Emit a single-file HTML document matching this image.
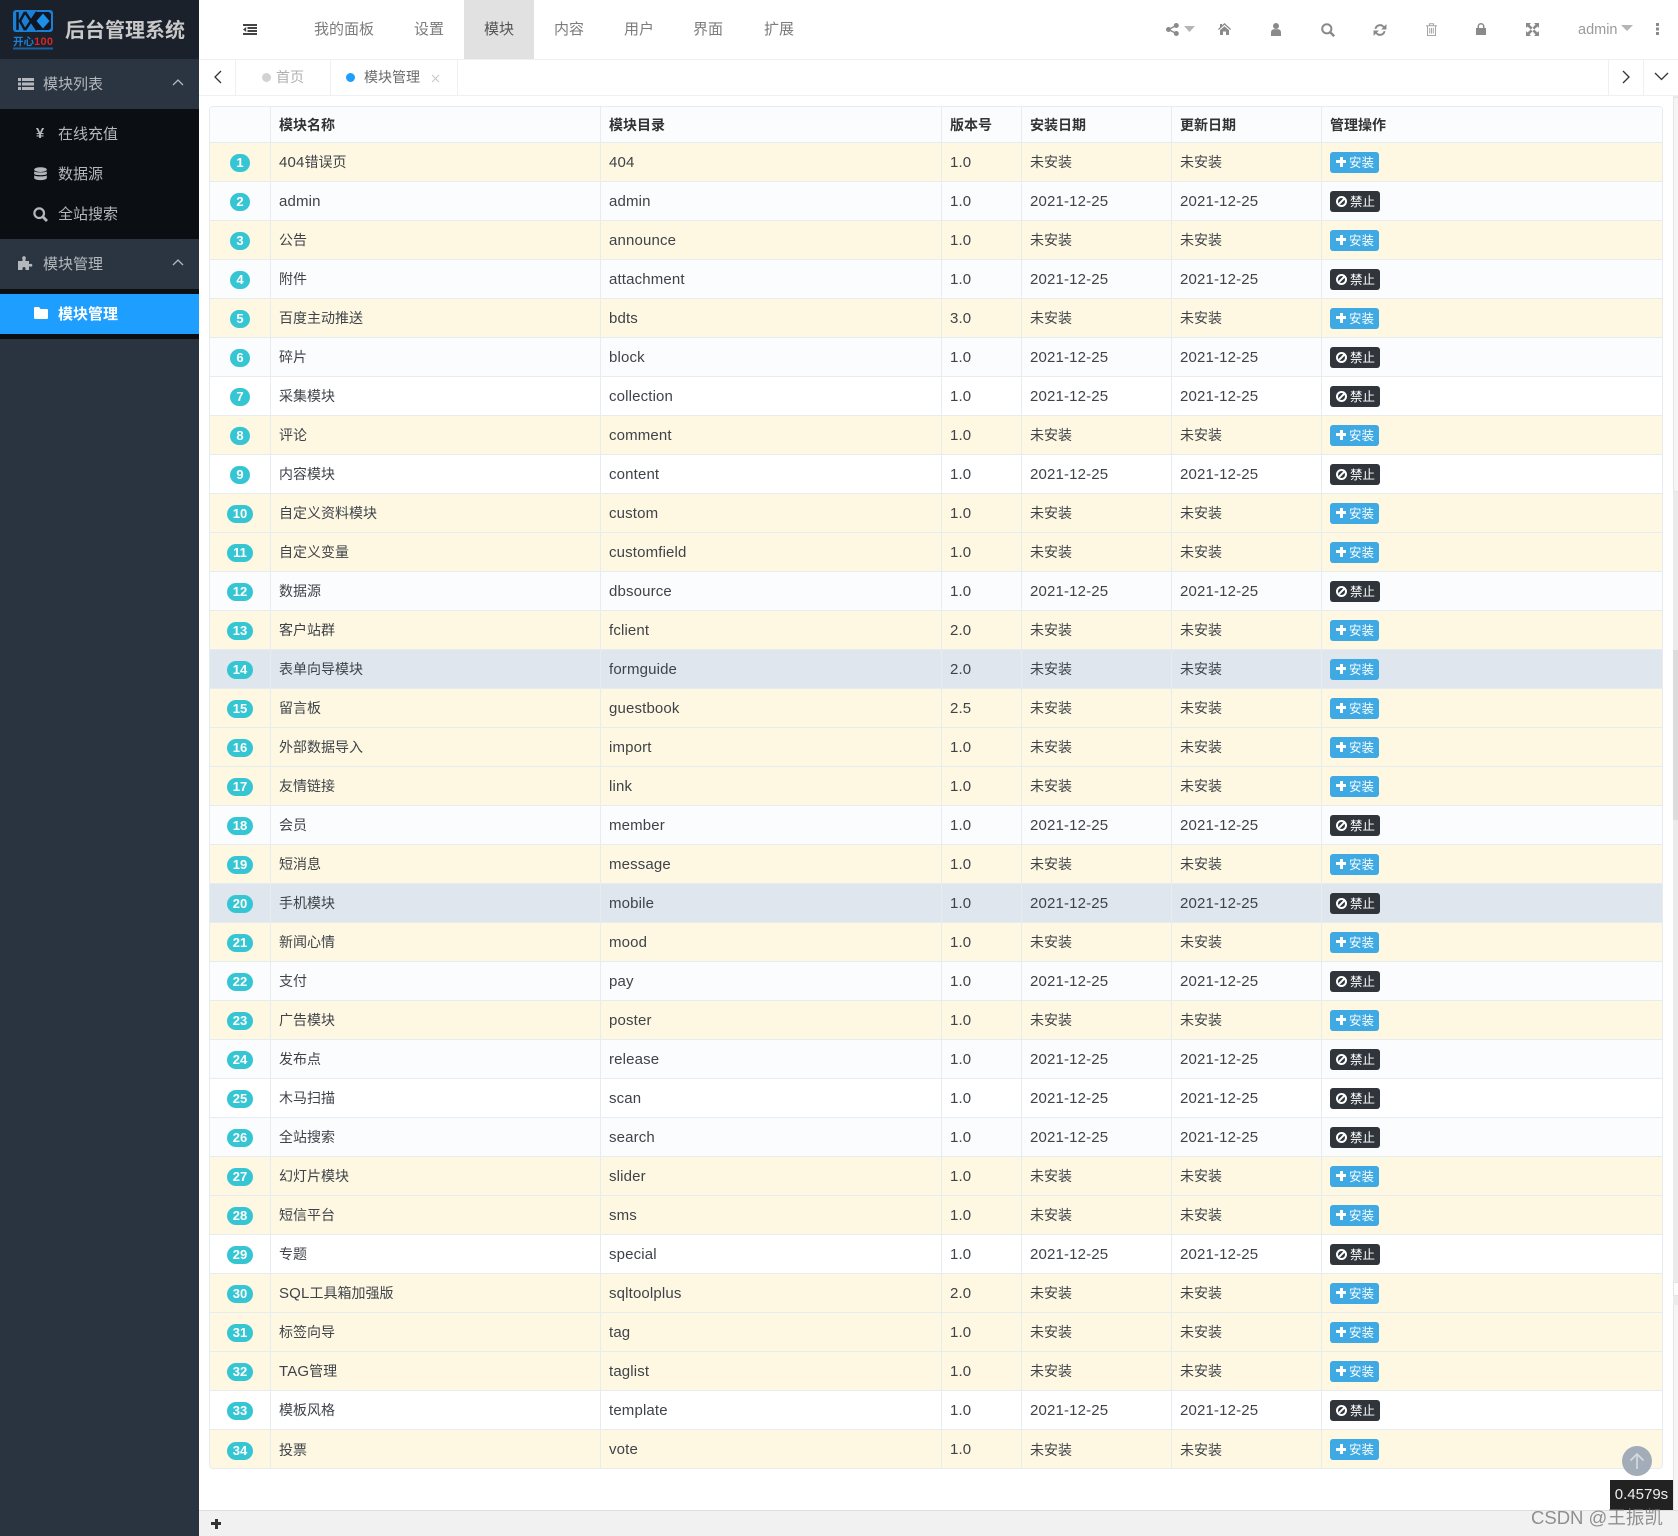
<!DOCTYPE html>
<html lang="zh"><head><meta charset="utf-8"><title>后台管理系统</title>
<style>
*,*::before,*::after{box-sizing:border-box}
html,body{margin:0;padding:0;width:1678px;height:1536px;overflow:hidden;background:#fff}
body{position:relative;font-family:"Liberation Sans","Noto Sans CJK SC",sans-serif;font-size:14px;color:#3d4249}
.a{position:absolute;white-space:nowrap}
svg{position:absolute;display:block}
#side{position:absolute;left:0;top:0;width:199px;height:1536px;background:#2a3440}
.nav{top:0;height:59px;line-height:60px;font-size:15px;color:#7c7c7c}
.sd{font-size:15px;color:#b4b8bd;line-height:24px;height:24px}
table{border-collapse:separate;border-spacing:0;table-layout:fixed;width:1452px}
th,td{padding:0 0 0 8px;border-right:1px solid #e7ecf1;border-bottom:1px solid #e7ecf1;text-align:left;overflow:hidden;white-space:nowrap;font-size:14px}
th{height:36px;font-weight:700;color:#333;background:#fbfcfe}
td{height:39px;background:#fff;color:#3f4349}
th:last-child,td:last-child{border-right:0}
tr:last-child td{border-bottom:0}
tr:nth-child(even) td{background:#fbfcfe}
tr.y td{background:#fef8e3!important}
tr.h td{background:#e0e6ee!important}
td:nth-child(1){padding:2px 0 0;text-align:center}
td:nth-child(3),td:nth-child(4),.l{font-family:"Liberation Sans",sans-serif;font-size:15px;letter-spacing:.15px}
.n{display:inline-block;min-width:20px;height:18px;line-height:18px;padding:0 3px;border-radius:9px;background:#36c6d3;color:#fff;font-size:13px;font-weight:700;text-align:center}
.n.w{min-width:26px}
.i,.b{display:inline-block;position:relative;height:21px;width:49px;border-radius:3px;background:#3ea9e2;color:#fff;line-height:22px;font-size:12.500px;padding-left:19px;vertical-align:middle}
.b{width:50px;background:#2f353b;padding-left:20px}
.i::before{content:"";position:absolute;left:6px;top:5px;width:10px;height:10px;background:linear-gradient(#fff,#fff) center/10px 3px no-repeat,linear-gradient(#fff,#fff) center/3px 10px no-repeat}
.b::before{content:"";position:absolute;left:6px;top:5px;width:11px;height:11px;border:2px solid #fff;border-radius:50%}
.b::after{content:"";position:absolute;left:7.500px;top:9.500px;width:8px;height:2px;background:#fff;transform:rotate(-45deg)}
</style></head><body>

<div id="side">
<div class="a" style="left:0;top:0;width:199px;height:59px;background:#1a212b"></div>
<svg style="left:13px;top:10px" width="41" height="40" viewBox="0 0 41 40">
<rect x="0" y="0" width="40" height="22" rx="3" fill="#1c7fd6"/>
<path d="M24 2H36L38 4V18L36 20H24L18 11Z" fill="#101722"/>
<path d="M30 3.500L36.500 11L30 18.500L23.500 11Z" fill="#1c8fe8"/>
<path d="M4.500 2V20M12 2L7 11L12 20M12 2L24 20M24 2L12 20" fill="none" stroke="#101722" stroke-width="2.500"/>
<text x="0" y="35" font-size="10.500" font-weight="700" fill="#1c7fd6" font-family="Noto Sans CJK SC">开心</text>
<text x="21" y="35" font-size="11" font-weight="700" fill="#d8242a" font-family="Liberation Sans" textLength="19">100</text>
<rect x="0" y="37.500" width="40" height="2" fill="#1c5f9e"/>
</svg>
<div class="a" style="left:65px;top:16px;font-size:20px;line-height:30px;font-weight:700;color:#c9c9c9">后台管理系统</div>

<div class="a" style="left:0;top:59px;width:199px;height:50px;background:#2b3541"></div>
<svg style="left:18px;top:77px" width="16" height="14" viewBox="0 0 16 14" fill="#b4b8bd"><path d="M0 1h3v3H0zM4 1h12v3H4zM0 5.500h3v3H0zM4 5.500h12v3H4zM0 10h3v3H0zM4 10h12v3H4z"/></svg>
<div class="a sd" style="left:43px;top:73px">模块列表</div>
<svg style="left:172px;top:78px" width="12" height="8" viewBox="0 0 12 8" fill="none" stroke="#b4b8bd" stroke-width="1.300"><path d="M1 7L6 2L11 7"/></svg>

<div class="a" style="left:0;top:109px;width:199px;height:130px;background:#0b0e13"></div>
<div class="a" style="left:33px;top:123px;width:14px;text-align:center;font-size:15px;font-weight:700;line-height:22px;color:#b4b8bd">¥</div>
<div class="a sd" style="left:58px;top:123px">在线充值</div>
<svg style="left:34px;top:167px" width="13" height="15" viewBox="0 0 13 15" fill="#b4b8bd"><ellipse cx="6.500" cy="2.600" rx="6.300" ry="2.400"/><path d="M.2 4.200c1 1.600 11.600 1.600 12.600 0V7c-1 1.600-11.600 1.600-12.600 0zM.2 8.200c1 1.600 11.600 1.600 12.600 0V11c0 2.800-12.600 2.800-12.600 0z"/></svg>
<div class="a sd" style="left:58px;top:163px">数据源</div>
<svg style="left:33px;top:207px" width="15" height="15" viewBox="0 0 15 15" fill="none" stroke="#b4b8bd" stroke-width="2.200"><circle cx="6.200" cy="6.200" r="4.800"/><path d="M9.800 9.800L14 14" stroke-width="2.800"/></svg>
<div class="a sd" style="left:58px;top:203px">全站搜索</div>

<div class="a" style="left:0;top:239px;width:199px;height:50px;background:#2b3541"></div>
<svg style="left:18px;top:256px" width="15" height="14" viewBox="0 0 15 14" fill="#b4b8bd"><path d="M0 5H4.500V3A1.800 1.800 0 1 1 7.500 3V5H11V8H12A1.500 1.500 0 1 1 12 10.500H11V14H7.500V12.500A1.500 1.500 0 0 0 4.500 12.500V14H0Z"/></svg>
<div class="a sd" style="left:43px;top:253px">模块管理</div>
<svg style="left:172px;top:258px" width="12" height="8" viewBox="0 0 12 8" fill="none" stroke="#b4b8bd" stroke-width="1.300"><path d="M1 7L6 2L11 7"/></svg>

<div class="a" style="left:0;top:289px;width:199px;height:50px;background:#0b0e13"></div>
<div class="a" style="left:0;top:294px;width:199px;height:40px;background:#1e9fff"></div>
<svg style="left:34px;top:307px" width="14" height="12" viewBox="0 0 14 12" fill="#fff"><path d="M1.200 0H5L6.500 2H12.800C13.500 2 14 2.500 14 3.200V10.800C14 11.500 13.500 12 12.800 12H1.200C.5 12 0 11.500 0 10.800V1.200C0 .5.500 0 1.200 0Z"/></svg>
<div class="a sd" style="left:58px;top:303px;color:#fff;font-weight:700">模块管理</div>
</div>

<!-- top nav -->
<div class="a" style="left:199px;top:59px;width:1479px;height:1px;background:#eef0f2"></div>
<svg style="left:243px;top:24px" width="14" height="11" viewBox="0 0 14 11" fill="#444"><path d="M0 0h14v2H0zM4.500 3h9.500v2H4.500zM4.500 6h9.500v2H4.500zM0 9h14v2H0zM3.200 3v5L0 5.500z"/></svg>
<div class="a" style="left:464px;top:0;width:70px;height:59px;background:#e1e1e1"></div>
<div class="a nav" style="left:314px">我的面板</div>
<div class="a nav" style="left:414px">设置</div>
<div class="a nav" style="left:484px;color:#555">模块</div>
<div class="a nav" style="left:554px">内容</div>
<div class="a nav" style="left:624px">用户</div>
<div class="a nav" style="left:693px">界面</div>
<div class="a nav" style="left:764px">扩展</div>

<svg style="left:1166px;top:23px" width="13" height="13" viewBox="0 0 13 13" fill="#8a8a8a"><circle cx="10.300" cy="2.500" r="2.500"/><circle cx="2.500" cy="6.500" r="2.500"/><circle cx="10.300" cy="10.500" r="2.500"/><path d="M2.500 6.500L10.300 2.500M2.500 6.500L10.300 10.500" stroke="#8a8a8a" stroke-width="1.500"/></svg>
<svg style="left:1184px;top:26px" width="11" height="6" viewBox="0 0 11 6" fill="#b5b5b5"><path d="M0 0H11L5.500 6Z"/></svg>
<svg style="left:1218px;top:23px" width="13" height="12" viewBox="0 0 13 12" fill="#8a8a8a"><path d="M6.500 0L13 6L12.200 7L6.500 1.800L.8 7L0 6L2 4.200V1H4V2.300ZM2 7.200L6.500 3.200L11 7.200V12H8V8.500H5V12H2Z"/></svg>
<svg style="left:1271px;top:23px" width="10" height="13" viewBox="0 0 10 13" fill="#8a8a8a"><circle cx="5" cy="3" r="3"/><path d="M0 13V9.500C0 7.500 1.500 6.300 3 6.300H7C8.500 6.300 10 7.500 10 9.500V13Z"/></svg>
<svg style="left:1321px;top:23px" width="14" height="14" viewBox="0 0 14 14" fill="none" stroke="#8a8a8a" stroke-width="2"><circle cx="5.800" cy="5.800" r="4.600"/><path d="M9.200 9.200L13.200 13.200" stroke-width="2.500"/></svg>
<svg style="left:1373px;top:23px" width="14" height="14" viewBox="0 0 13 13" fill="#8a8a8a"><path d="M1.500 5.500A5 5 0 0 1 10.400 3L12.500 1V6H7.500L9.300 4.200A3.500 3.500 0 0 0 3.200 5.500ZM11.500 7.500A5 5 0 0 1 2.600 10L.5 12V7H5.500L3.700 8.800A3.500 3.500 0 0 0 9.800 7.500Z"/></svg>
<svg style="left:1426px;top:23px" width="11" height="13" viewBox="0 0 11 13" fill="none" stroke="#a5a5a5" stroke-width="1"><path d="M0 2.800H11M3.500 2.500V.7H7.500V2.500M1.500 2.800V12.500H9.500V2.800M3.700 5V10.500M5.500 5V10.500M7.300 5V10.500"/></svg>
<svg style="left:1476px;top:23px" width="10" height="12" viewBox="0 0 10 12" fill="#8a8a8a"><path d="M0 5H1.500V3.500A3.500 3.500 0 0 1 8.500 3.500V5H10V12H0ZM3 5H7V3.500A2 2 0 0 0 3 3.500Z" fill-rule="evenodd"/></svg>
<svg style="left:1526px;top:23px" width="13" height="13" viewBox="0 0 13 13" fill="#8a8a8a"><path d="M0 0H5L3.500 1.500L6.500 4.800L4.800 6.500L1.500 3.500L0 5ZM13 0V5L11.500 3.500L8.200 6.500L6.500 4.800L9.500 1.500L8 0ZM0 13V8L1.500 9.500L4.800 6.500L6.500 8.200L3.500 11.500L5 13ZM13 13H8L9.500 11.500L6.500 8.200L8.200 6.500L11.500 9.500L13 8Z"/></svg>
<div class="a" style="left:1578px;top:0;line-height:60px;font-size:14.500px;color:#9a9a9a">admin</div>
<svg style="left:1621px;top:25px" width="12" height="6" viewBox="0 0 12 6" fill="#b5b5b5"><path d="M0 0H12L6 6Z"/></svg>
<svg style="left:1656px;top:23px" width="3" height="12" viewBox="0 0 3 12" fill="#8a8a8a"><path d="M0 0h3v3H0zM0 4.500h3v3H0zM0 9h3v3H0z"/></svg>

<!-- tab bar -->
<div class="a" style="left:199px;top:95px;width:1479px;height:1px;background:#eef0f2"></div>
<div class="a" style="left:235px;top:60px;width:1px;height:35px;background:#f0f0f0"></div>
<div class="a" style="left:330px;top:60px;width:1px;height:35px;background:#f0f0f0"></div>
<div class="a" style="left:457px;top:60px;width:1px;height:35px;background:#f0f0f0"></div>
<div class="a" style="left:1608px;top:60px;width:1px;height:35px;background:#f0f0f0"></div>
<div class="a" style="left:1643px;top:60px;width:1px;height:35px;background:#f0f0f0"></div>
<svg style="left:213px;top:70px" width="9" height="14" viewBox="0 0 9 14" fill="none" stroke="#333" stroke-width="1.300"><path d="M8 1L2 7L8 13"/></svg>
<div class="a" style="left:262px;top:73px;width:9px;height:9px;border-radius:50%;background:#d2d2d2"></div>
<div class="a" style="left:276px;top:64px;line-height:26px;color:#b0b0b0">首页</div>
<div class="a" style="left:346px;top:73px;width:9px;height:9px;border-radius:50%;background:#1e9fff"></div>
<div class="a" style="left:364px;top:64px;line-height:26px;color:#6a6a6a">模块管理</div>
<svg style="left:431px;top:74px" width="9" height="9" viewBox="0 0 9 9" fill="none" stroke="#c8c8c8" stroke-width="1.100"><path d="M1 1L8 8M8 1L1 8"/></svg>
<svg style="left:1622px;top:70px" width="9" height="14" viewBox="0 0 9 14" fill="none" stroke="#333" stroke-width="1.300"><path d="M1 1L7 7L1 13"/></svg>
<svg style="left:1654px;top:72px" width="15" height="9" viewBox="0 0 15 9" fill="none" stroke="#333" stroke-width="1.300"><path d="M1 1L7.500 7.500L14 1"/></svg>

<!-- table -->
<div class="a" style="left:209px;top:106px;width:1454px;height:1363px;border:1px solid #e7ecf1;border-radius:4px;overflow:hidden">
<table>
<colgroup><col style="width:61px"><col style="width:330px"><col style="width:341px"><col style="width:80px"><col style="width:150px"><col style="width:150px"><col style="width:340px"></colgroup>
<thead><tr><th></th><th>模块名称</th><th>模块目录</th><th>版本号</th><th>安装日期</th><th>更新日期</th><th>管理操作</th></tr></thead>
<tbody>
<tr class="y"><td><span class="n">1</span></td><td><span class="l">404</span>错误页</td><td>404</td><td>1.0</td><td>未安装</td><td>未安装</td><td><span class="i">安装</span></td></tr>
<tr><td><span class="n">2</span></td><td><span class="l">admin</span></td><td>admin</td><td>1.0</td><td class="l">2021-12-25</td><td class="l">2021-12-25</td><td><span class="b">禁止</span></td></tr>
<tr class="y"><td><span class="n">3</span></td><td>公告</td><td>announce</td><td>1.0</td><td>未安装</td><td>未安装</td><td><span class="i">安装</span></td></tr>
<tr><td><span class="n">4</span></td><td>附件</td><td>attachment</td><td>1.0</td><td class="l">2021-12-25</td><td class="l">2021-12-25</td><td><span class="b">禁止</span></td></tr>
<tr class="y"><td><span class="n">5</span></td><td>百度主动推送</td><td>bdts</td><td>3.0</td><td>未安装</td><td>未安装</td><td><span class="i">安装</span></td></tr>
<tr><td><span class="n">6</span></td><td>碎片</td><td>block</td><td>1.0</td><td class="l">2021-12-25</td><td class="l">2021-12-25</td><td><span class="b">禁止</span></td></tr>
<tr><td><span class="n">7</span></td><td>采集模块</td><td>collection</td><td>1.0</td><td class="l">2021-12-25</td><td class="l">2021-12-25</td><td><span class="b">禁止</span></td></tr>
<tr class="y"><td><span class="n">8</span></td><td>评论</td><td>comment</td><td>1.0</td><td>未安装</td><td>未安装</td><td><span class="i">安装</span></td></tr>
<tr><td><span class="n">9</span></td><td>内容模块</td><td>content</td><td>1.0</td><td class="l">2021-12-25</td><td class="l">2021-12-25</td><td><span class="b">禁止</span></td></tr>
<tr class="y"><td><span class="n w">10</span></td><td>自定义资料模块</td><td>custom</td><td>1.0</td><td>未安装</td><td>未安装</td><td><span class="i">安装</span></td></tr>
<tr class="y"><td><span class="n w">11</span></td><td>自定义变量</td><td>customfield</td><td>1.0</td><td>未安装</td><td>未安装</td><td><span class="i">安装</span></td></tr>
<tr><td><span class="n w">12</span></td><td>数据源</td><td>dbsource</td><td>1.0</td><td class="l">2021-12-25</td><td class="l">2021-12-25</td><td><span class="b">禁止</span></td></tr>
<tr class="y"><td><span class="n w">13</span></td><td>客户站群</td><td>fclient</td><td>2.0</td><td>未安装</td><td>未安装</td><td><span class="i">安装</span></td></tr>
<tr class="h"><td><span class="n w">14</span></td><td>表单向导模块</td><td>formguide</td><td>2.0</td><td>未安装</td><td>未安装</td><td><span class="i">安装</span></td></tr>
<tr class="y"><td><span class="n w">15</span></td><td>留言板</td><td>guestbook</td><td>2.5</td><td>未安装</td><td>未安装</td><td><span class="i">安装</span></td></tr>
<tr class="y"><td><span class="n w">16</span></td><td>外部数据导入</td><td>import</td><td>1.0</td><td>未安装</td><td>未安装</td><td><span class="i">安装</span></td></tr>
<tr class="y"><td><span class="n w">17</span></td><td>友情链接</td><td>link</td><td>1.0</td><td>未安装</td><td>未安装</td><td><span class="i">安装</span></td></tr>
<tr><td><span class="n w">18</span></td><td>会员</td><td>member</td><td>1.0</td><td class="l">2021-12-25</td><td class="l">2021-12-25</td><td><span class="b">禁止</span></td></tr>
<tr class="y"><td><span class="n w">19</span></td><td>短消息</td><td>message</td><td>1.0</td><td>未安装</td><td>未安装</td><td><span class="i">安装</span></td></tr>
<tr class="h"><td><span class="n w">20</span></td><td>手机模块</td><td>mobile</td><td>1.0</td><td class="l">2021-12-25</td><td class="l">2021-12-25</td><td><span class="b">禁止</span></td></tr>
<tr class="y"><td><span class="n w">21</span></td><td>新闻心情</td><td>mood</td><td>1.0</td><td>未安装</td><td>未安装</td><td><span class="i">安装</span></td></tr>
<tr><td><span class="n w">22</span></td><td>支付</td><td>pay</td><td>1.0</td><td class="l">2021-12-25</td><td class="l">2021-12-25</td><td><span class="b">禁止</span></td></tr>
<tr class="y"><td><span class="n w">23</span></td><td>广告模块</td><td>poster</td><td>1.0</td><td>未安装</td><td>未安装</td><td><span class="i">安装</span></td></tr>
<tr><td><span class="n w">24</span></td><td>发布点</td><td>release</td><td>1.0</td><td class="l">2021-12-25</td><td class="l">2021-12-25</td><td><span class="b">禁止</span></td></tr>
<tr><td><span class="n w">25</span></td><td>木马扫描</td><td>scan</td><td>1.0</td><td class="l">2021-12-25</td><td class="l">2021-12-25</td><td><span class="b">禁止</span></td></tr>
<tr><td><span class="n w">26</span></td><td>全站搜索</td><td>search</td><td>1.0</td><td class="l">2021-12-25</td><td class="l">2021-12-25</td><td><span class="b">禁止</span></td></tr>
<tr class="y"><td><span class="n w">27</span></td><td>幻灯片模块</td><td>slider</td><td>1.0</td><td>未安装</td><td>未安装</td><td><span class="i">安装</span></td></tr>
<tr class="y"><td><span class="n w">28</span></td><td>短信平台</td><td>sms</td><td>1.0</td><td>未安装</td><td>未安装</td><td><span class="i">安装</span></td></tr>
<tr><td><span class="n w">29</span></td><td>专题</td><td>special</td><td>1.0</td><td class="l">2021-12-25</td><td class="l">2021-12-25</td><td><span class="b">禁止</span></td></tr>
<tr class="y"><td><span class="n w">30</span></td><td><span class="l">SQL</span>工具箱加强版</td><td>sqltoolplus</td><td>2.0</td><td>未安装</td><td>未安装</td><td><span class="i">安装</span></td></tr>
<tr class="y"><td><span class="n w">31</span></td><td>标签向导</td><td>tag</td><td>1.0</td><td>未安装</td><td>未安装</td><td><span class="i">安装</span></td></tr>
<tr class="y"><td><span class="n w">32</span></td><td><span class="l">TAG</span>管理</td><td>taglist</td><td>1.0</td><td>未安装</td><td>未安装</td><td><span class="i">安装</span></td></tr>
<tr><td><span class="n w">33</span></td><td>模板风格</td><td>template</td><td>1.0</td><td class="l">2021-12-25</td><td class="l">2021-12-25</td><td><span class="b">禁止</span></td></tr>
<tr class="y"><td><span class="n w">34</span></td><td>投票</td><td>vote</td><td>1.0</td><td>未安装</td><td>未安装</td><td><span class="i">安装</span></td></tr>
</tbody></table>
</div>

<!-- scrollbar -->
<div class="a" style="left:1673px;top:96px;width:5px;height:1414px;background:#ebebeb"></div>
<div class="a" style="left:1673px;top:97px;width:5px;height:395px;background:#f5f5f5;border:1px solid #e4e4e4;border-right:0;border-radius:3px 0 0 3px"></div>
<div class="a" style="left:1673px;top:650px;width:5px;height:170px;background:#dcdcdc"></div>
<div class="a" style="left:1673px;top:1282px;width:5px;height:14px;background:#fbfbfb;border:1px solid #e4e4e4;border-right:0"></div>
<div class="a" style="left:1673px;top:1305px;width:5px;height:205px;background:#f5f5f5;border-left:1px solid #e4e4e4"></div>

<!-- back to top -->
<div class="a" style="left:1622px;top:1446px;width:30px;height:30px;border-radius:50%;background:#a3adb9"></div>
<svg style="left:1627px;top:1451px" width="20" height="20" viewBox="0 0 20 20" fill="none" stroke="#d7dbe0" stroke-width="1.600"><path d="M10 18V3M3.500 9.500L10 3L16.500 9.500"/></svg>

<!-- footer -->
<div class="a" style="left:199px;top:1510px;width:1479px;height:26px;background:#f1f1f1;border-top:1px solid #ddd"></div>
<div class="a" style="left:211px;top:1522px;width:10px;height:3px;background:#333"></div>
<div class="a" style="left:215px;top:1519px;width:3px;height:10px;background:#333"></div>
<div class="a" style="left:1610px;top:1480px;width:63px;height:30px;background:#222;color:#eee;font-size:15px;line-height:30px;text-align:center">0.4579s</div>
<div class="a" style="left:1531px;top:1505px;font-size:18.500px;line-height:26px;color:rgba(110,110,110,.75);font-family:'Liberation Sans','Noto Sans CJK SC',sans-serif">CSDN @王振凯</div>
</body></html>
